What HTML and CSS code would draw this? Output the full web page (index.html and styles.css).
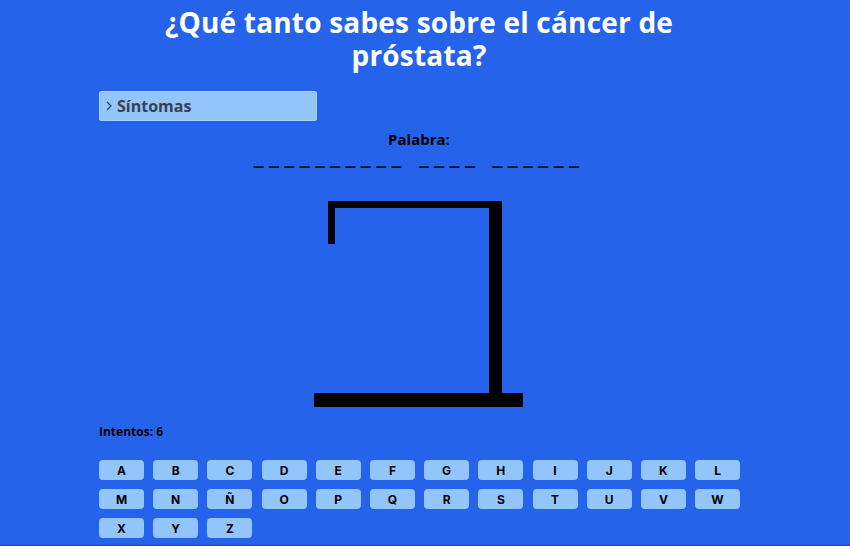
FILE: index.html
```html
<!DOCTYPE html>
<html lang="es">
<head>
<meta charset="utf-8">
<title>Ahorcado</title>
<link rel="stylesheet" href="styles.css">
</head>
<body>
<div class="page">
  <h1 class="title">¿Qué tanto sabes sobre el cáncer de próstata?</h1>
  <div class="hint">
    <svg class="chev" width="6" height="10" viewBox="0 0 6 10"><polyline points="1,1 5,5 1,9" fill="none" stroke="#374151" stroke-width="1.2"/></svg>
    <span class="hint-text">Síntomas</span>
  </div>
  <div class="word-label">Palabra:</div>
  <div class="word">__________ ____ ______</div>
  <svg class="gallows" width="240" height="222" viewBox="0 0 240 222">
    <rect x="29" y="11" width="174" height="7" fill="#000"/>
    <rect x="29" y="11" width="7" height="43" fill="#000"/>
    <rect x="190" y="11" width="13" height="196" fill="#000"/>
    <rect x="15" y="203" width="209" height="14" fill="#000"/>
  </svg>
  <div class="tries">Intentos: 6</div>
  <div class="keys">
    <button class="key">A</button><button class="key">B</button><button class="key">C</button><button class="key">D</button><button class="key">E</button><button class="key">F</button><button class="key">G</button><button class="key">H</button><button class="key">I</button><button class="key">J</button><button class="key">K</button><button class="key">L</button>
    <button class="key">M</button><button class="key">N</button><button class="key">Ñ</button><button class="key">O</button><button class="key">P</button><button class="key">Q</button><button class="key">R</button><button class="key">S</button><button class="key">T</button><button class="key">U</button><button class="key">V</button><button class="key">W</button>
    <button class="key">X</button><button class="key">Y</button><button class="key">Z</button>
  </div>
</div>
</body>
</html>
```

FILE: styles.css
```css
html {
  background: #3f3f46;
}
body {
  margin: 0;
  padding: 0 12px 0 0;
  height: 545px;
  background: #2563eb;
  font-family: "Open Sans", "Liberation Sans", sans-serif;
  overflow: hidden;
}
.page {
  width: 640px;
  margin: 0 auto;
  display: flex;
  flex-direction: column;
  align-items: stretch;
}
.title {
  margin: 6px 0 0;
  font-size: 28px;
  line-height: 33px;
  font-weight: 700;
  letter-spacing: 0.2px;
  color: #ffffff;
  text-align: center;
  padding: 0 50px;
}
.hint {
  margin-top: 19px;
  width: 218px;
  height: 30px;
  box-sizing: border-box;
  background: #93c5fd;
  border: 1px solid #a9d0fb;
  border-radius: 2px;
  display: flex;
  align-items: center;
  padding-left: 6px;
}
.chev {
  display: block;
}
.hint-text {
  margin-left: 5px;
  font-size: 16px;
  font-weight: 700;
  color: #374151;
}
.word-label {
  margin-top: 9px;
  text-align: center;
  font-size: 15px;
  line-height: 18px;
  font-weight: 700;
  color: #000;
}
.word {
  margin-top: 1px;
  text-align: center;
  font-family: "DejaVu Sans", sans-serif;
  font-size: 20px;
  line-height: 14px;
  letter-spacing: 5.3px;
  font-weight: 700;
  color: #000;
}
.gallows {
  display: block;
  align-self: center;
  margin-top: 27px;
}
.tries {
  margin-top: 12px;
  font-size: 12px;
  line-height: 16px;
  font-weight: 700;
  color: #000;
}
.keys {
  margin-top: 20px;
  display: grid;
  grid-template-columns: repeat(12, 45px);
  column-gap: 9.2px;
  row-gap: 9px;
}
.key {
  height: 20px;
  padding: 0;
  border: none;
  border-radius: 4px;
  background: #93c5fd;
  font-family: Inter, "Liberation Sans", sans-serif;
  font-size: 12px;
  font-weight: 700;
  color: #000;
}
```
